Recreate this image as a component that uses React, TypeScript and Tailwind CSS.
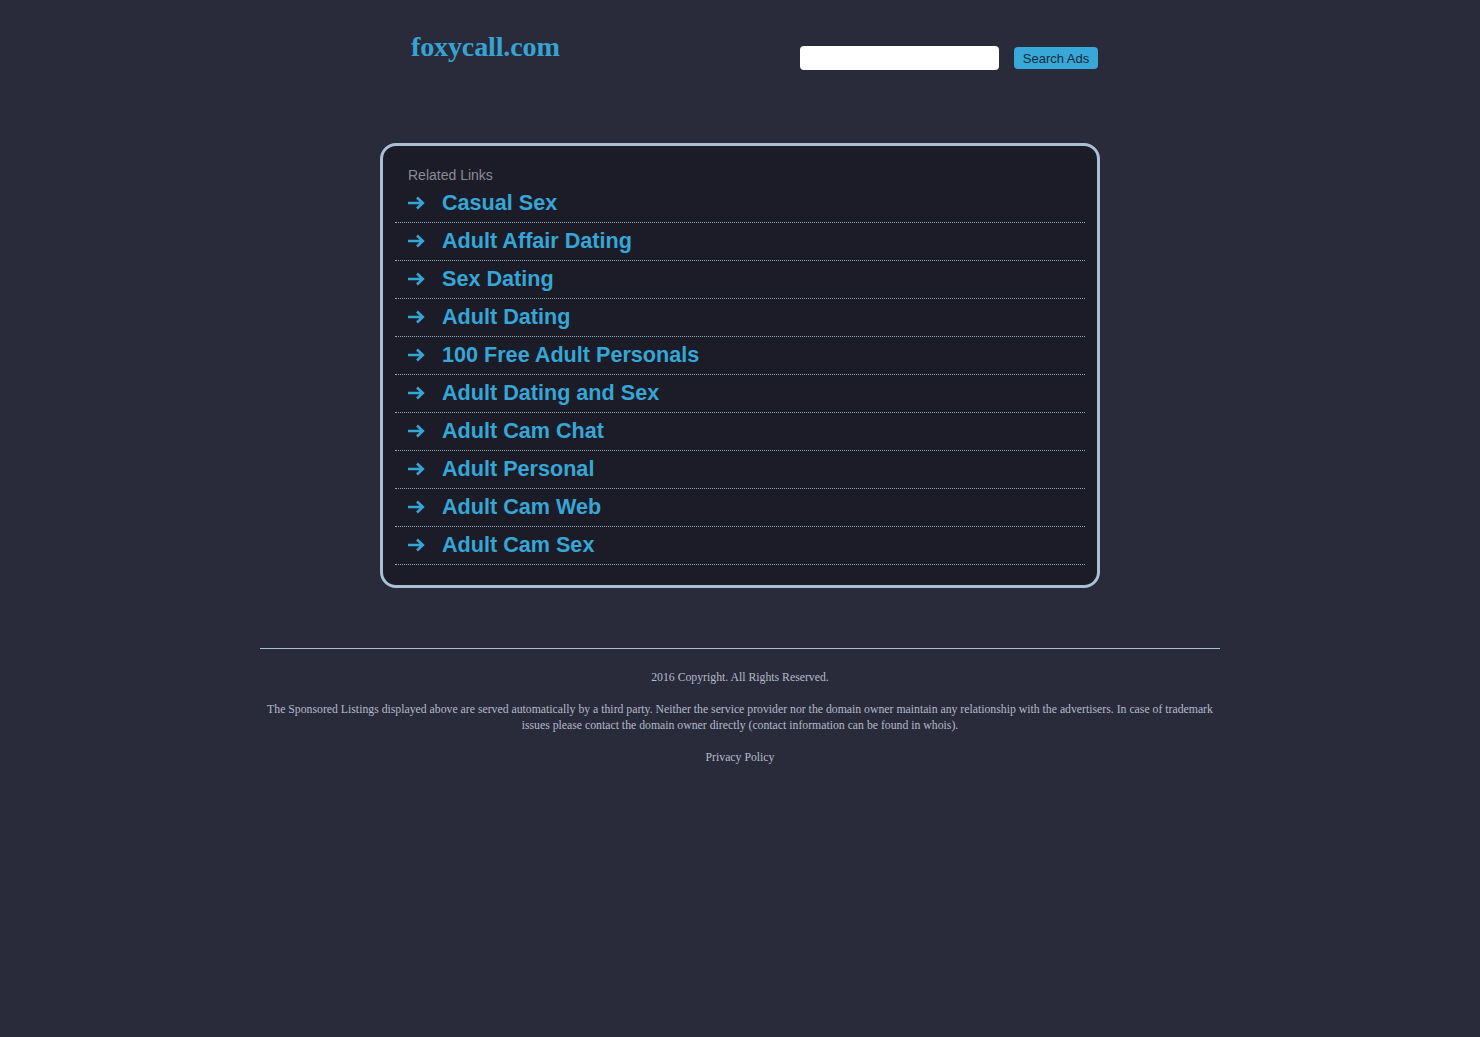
const links = [
  "Casual Sex",
  "Adult Affair Dating",
  "Sex Dating",
  "Adult Dating",
  "100 Free Adult Personals",
  "Adult Dating and Sex",
  "Adult Cam Chat",
  "Adult Personal",
  "Adult Cam Web",
  "Adult Cam Sex",
];

function Arrow() {
  return (
    <svg width="18" height="14" viewBox="0 0 18 14" className="shrink-0">
      <path
        d="M1 7 H15.5 M10 1.5 L15.8 7 L10 12.5"
        fill="none"
        stroke="#36a6d6"
        strokeWidth="2.6"
        strokeLinecap="butt"
      />
    </svg>
  );
}

export default function App() {
  return (
    <div className="min-h-screen bg-[#292a3a] font-['Liberation_Sans',Arial,sans-serif]">
      <div className="w-[960px] mx-auto">
        {/* header */}
        <div className="w-[720px] mx-auto flex items-start justify-between pt-[30px] h-[143px]">
          <a
            href="#"
            className="ml-[31px] font-['Liberation_Serif','Times_New_Roman',serif] font-bold text-[28.2px] leading-[34px] text-[#36a3d2] tracking-[-0.2px]"
          >
            foxycall.com
          </a>
          <div className="flex items-center mt-[16px] mr-[2px]">
            <input
              type="text"
              className="w-[199px] h-[24px] bg-white rounded-[4px] outline-none px-2 text-[13px]"
            />
            <button className="ml-[15px] w-[84px] h-[22px] rounded-[4px] bg-[#38a8d8] text-[#17283a] text-[13px] leading-[22px] pt-px">
              Search Ads
            </button>
          </div>
        </div>

        {/* related links */}
        <div className="w-[720px] mx-auto border-[3px] border-[#a9c0d3] rounded-[16px] bg-[#1c1c28] pt-[20px] pb-[20px]">
          <div className="px-[25px] text-[14px] leading-[18px] text-[#8b8b95] pb-px">Related Links</div>
          <ul className="mx-[12px]">
            {links.map((l) => (
              <li
                key={l}
                className="flex items-center h-[38px] pl-[12px] pb-[2px] border-b border-dotted border-[#8fa9bb]"
              >
                <Arrow />
                <a
                  href="#"
                  className="ml-[17px] text-[21.6px] font-bold leading-[35px] text-[#36a6d6]"
                >
                  {l}
                </a>
              </li>
            ))}
          </ul>
        </div>

        {/* footer */}
        <div className="mt-[60px] border-t border-[#a9c0d3] pt-[21px] pb-[40px] text-center font-['Liberation_Serif','Times_New_Roman',serif] text-[11.75px] leading-[16px] text-[#b4bccb]">
          <p>2016 Copyright. All Rights Reserved.</p>
          <p className="mt-[16px]">
            The Sponsored Listings displayed above are served automatically by a third party. Neither the
            service provider nor the domain owner maintain any relationship with the advertisers. In case of
            trademark issues please contact the domain owner directly (contact information can be found in
            whois).
          </p>
          <p className="mt-[16px]">
            <a href="#">Privacy Policy</a>
          </p>
        </div>
      </div>
    </div>
  );
}
